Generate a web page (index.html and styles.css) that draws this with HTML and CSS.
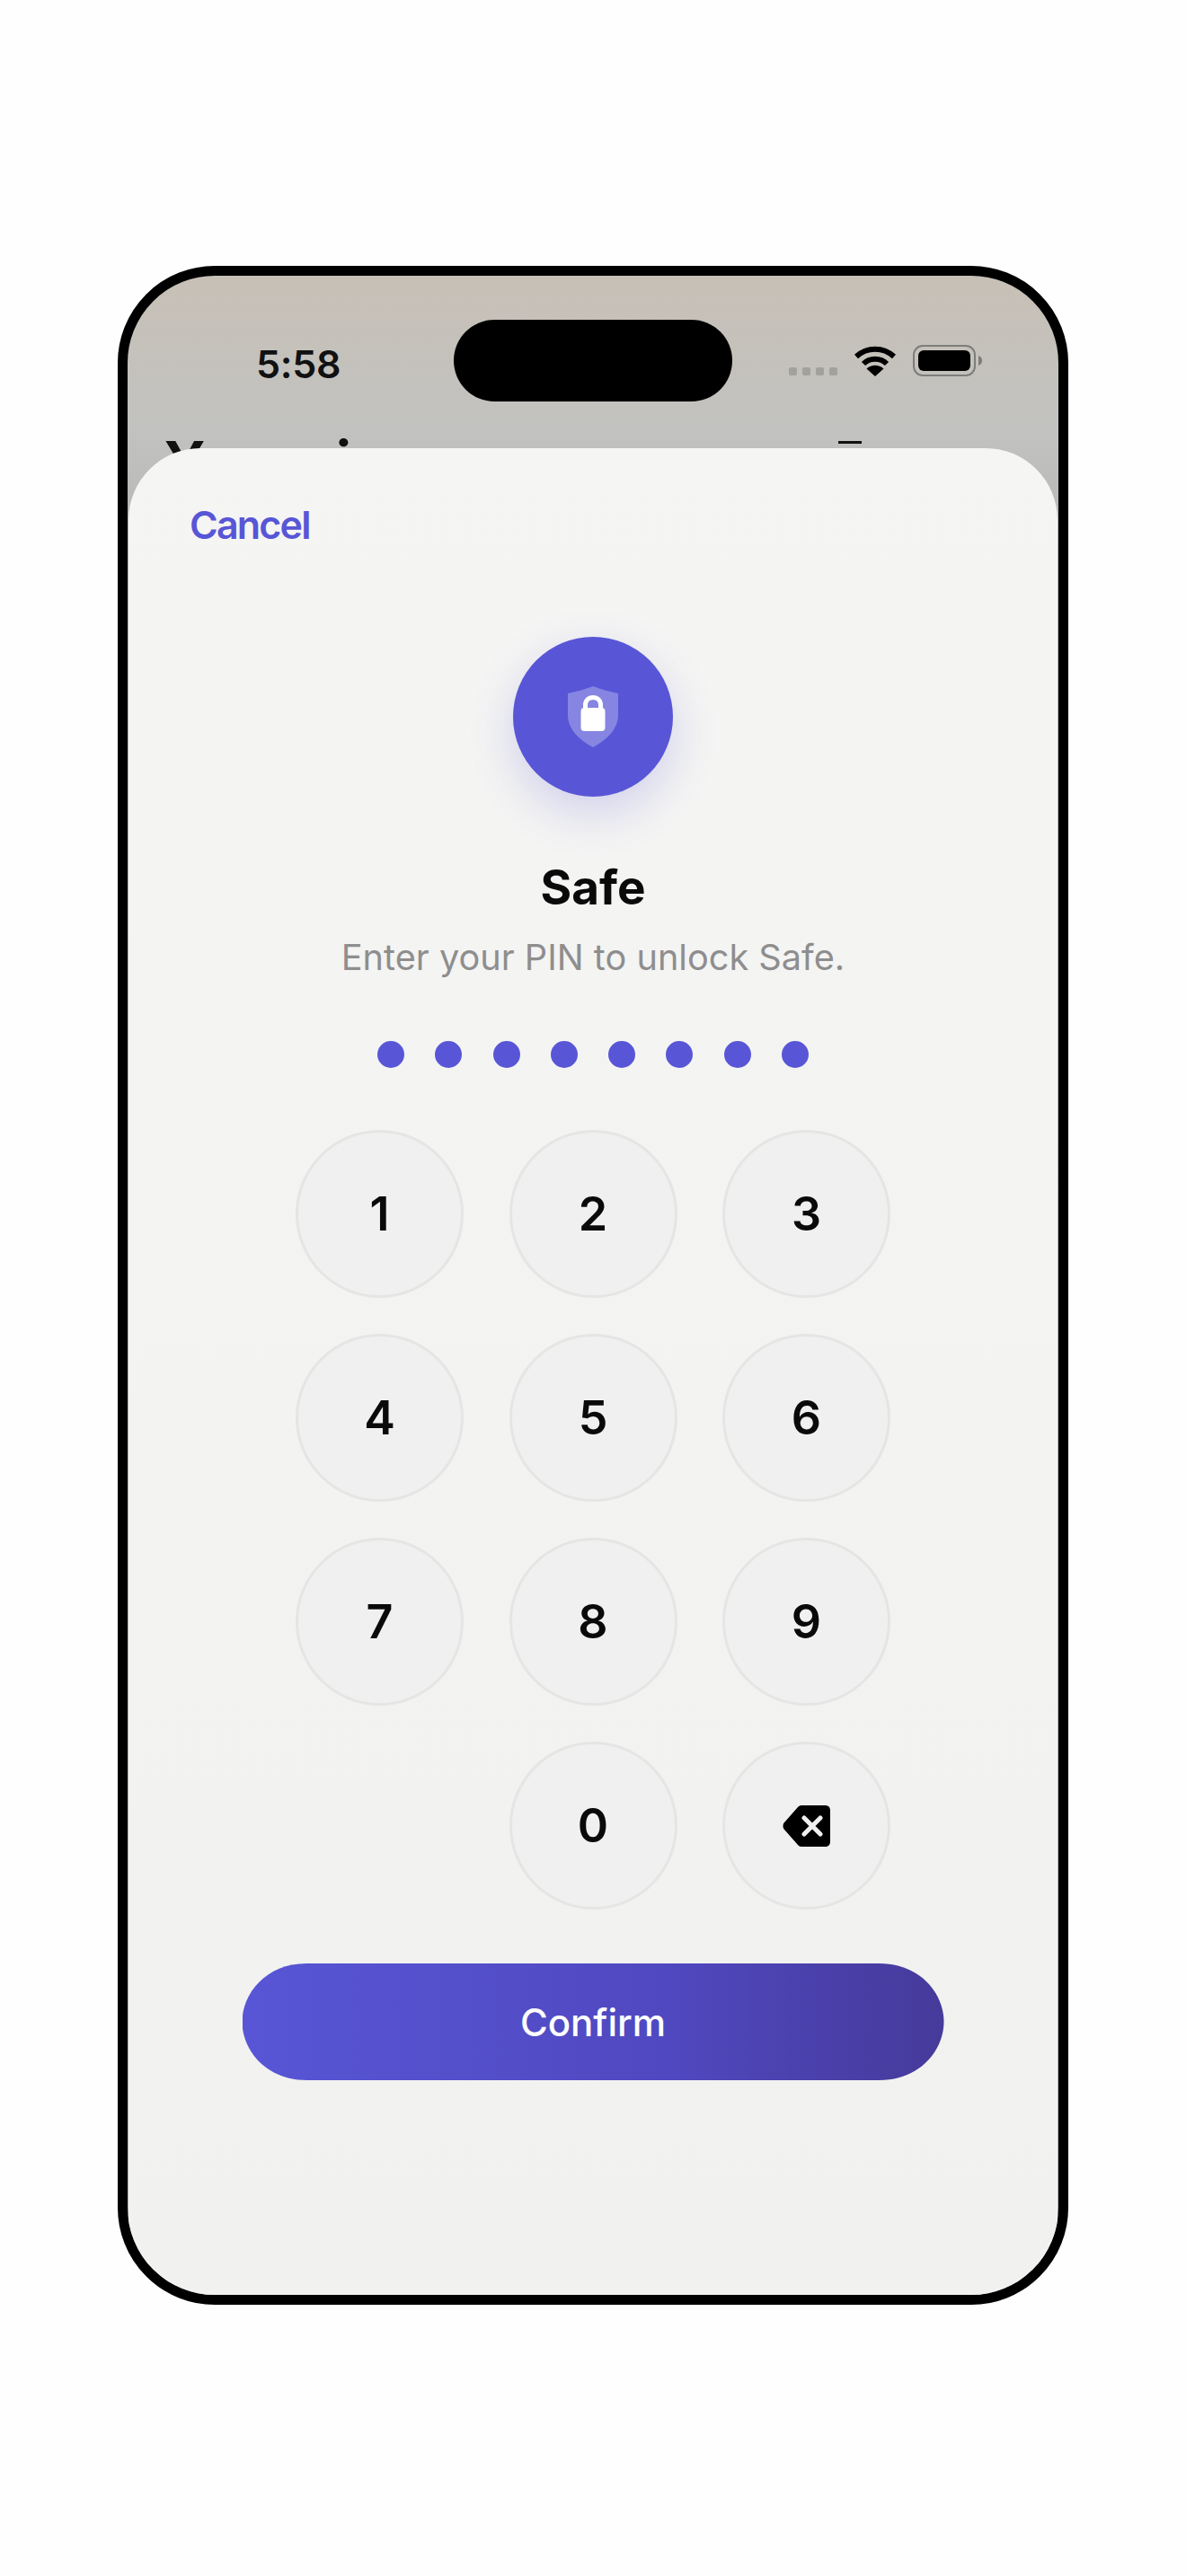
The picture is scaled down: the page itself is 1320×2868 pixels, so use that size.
FILE: index.html
```html
<!DOCTYPE html>
<html>
  <head>
    <title>Safe</title>
    <link rel="stylesheet" href="styles.css">
  </head>
  <body>
    <div class="phone">
      <div class="status">
        <span class="time">5:58</span>
        <div class="island"></div>
        <div class="signal">
          <i></i><i></i><i></i><i></i>
        </div>
        <svg class="wifi" viewBox="0 0 48 36">
          <path d="M3 13 C15 2 33 2 45 13" fill="none" stroke="#000" stroke-width="6"/>
          <path d="M11 21 C18 14 30 14 37 21" fill="none" stroke="#000" stroke-width="6"/>
          <path d="M24 35 L14.5 26.5 C20 21.5 28 21.5 33.5 26.5 Z" fill="#000"/>
        </svg>
        <svg class="battery" viewBox="0 0 78 36">
          <rect x="1" y="1" width="68" height="33" rx="10" fill="none" stroke="#7d7d7b" stroke-width="2"/>
          <rect x="6" y="6" width="58" height="23" rx="6" fill="#000"/>
          <path d="M73 12 C76 13 77 15 77 17.500 C77 20 76 22 73 23 Z" fill="#7d7d7b"/>
        </svg>
      </div>
      <div class="behind">
        <span class="behind-title">Your ai</span>
        <span class="behind-dash"></span>
      </div>

      <div class="sheet">
        <a class="cancel">Cancel</a>
        <div class="badge">
          <svg class="shield" viewBox="0 0 58 68">
            <path d="M29 0 C37 3 47 6 57 8 L57 32 C57 48 44 60 29 68 C14 60 1 48 1 32 L1 8 C11 6 21 3 29 0 Z" fill="#8685e2"/>
            <path d="M20.500 24 L20.500 21 C20.500 16 24 12.500 29 12.500 C34 12.500 37.500 16 37.500 21 L37.500 24" fill="none" stroke="#fff" stroke-width="5"/>
            <rect x="15.500" y="24" width="27" height="26" rx="4" fill="#fff"/>
          </svg>
        </div>
        <h1 class="title">Safe</h1>
        <p class="subtitle">Enter your PIN to unlock Safe.</p>
        <div class="pin-dots">
          <i></i><i></i><i></i><i></i><i></i><i></i><i></i><i></i>
        </div>
        <div class="keypad">
          <button class="key">1</button>
          <button class="key">2</button>
          <button class="key">3</button>
          <button class="key">4</button>
          <button class="key">5</button>
          <button class="key">6</button>
          <button class="key">7</button>
          <button class="key">8</button>
          <button class="key">9</button>
          <span></span>
          <button class="key">0</button>
          <button class="key">
            <svg class="backspace" viewBox="0 0 54 46">
              <path d="M17 2 C18 1 19 0 21 0 L47 0 C51 0 53 2 53 6 L53 40 C53 44 51 46 47 46 L21 46 C19 46 18 45 17 44 L2 27 C0 25 0 21 2 19 Z" fill="#000"/>
              <path d="M24 14 L42 32 M42 14 L24 32" fill="none" stroke="#f0f0f0" stroke-width="5" stroke-linecap="round"/>
            </svg>
          </button>
        </div>
        <button class="confirm">Confirm</button>
      </div>
    </div>
  </body>
</html>
```

FILE: styles.css
```css
html,
body {
  margin: 0;
  background-color: #fefefe;
  font-family: Inter, "Liberation Sans", sans-serif;
}
body {
  height: 2868px;
  padding-top: 296px;
  box-sizing: border-box;
}
.phone {
  position: relative;
  box-sizing: border-box;
  width: 1058px;
  height: 2270px;
  margin: 0 auto;
  border: 11px solid #000;
  border-radius: 108px;
  overflow: hidden;
  background: linear-gradient(#c7c0b6, #c2c2c0 170px, #b6b6b6 300px);
}
.status {
  display: flex;
  align-items: flex-start;
  padding: 49px 0 0 143px;
}
.time {
  width: 220px;
  margin-top: 23px;
  font-size: 43px;
  line-height: 52px;
  font-weight: 600;
  letter-spacing: -0.3px;
  color: #111;
}
.island {
  width: 310px;
  height: 91px;
  border-radius: 46px;
  background-color: #000;
}
.signal {
  display: flex;
  gap: 6px;
  margin: 53px 0 0 63px;
}
.signal i {
  width: 9px;
  height: 9px;
  border-radius: 2px;
  background-color: #a2a19e;
}
.wifi {
  width: 48px;
  height: 36px;
  margin: 28px 0 0 18px;
}
.battery {
  width: 78px;
  height: 36px;
  margin: 28px 0 0 18px;
}
.behind {
  display: flex;
  justify-content: space-between;
  padding: 36px 219px 0 41px;
}
.behind-title {
  font-size: 62px;
  line-height: 62px;
  font-weight: 700;
  color: #111;
}
.behind-dash {
  width: 26px;
  height: 3px;
  margin-top: 8px;
  background-color: #111;
}
.sheet {
  position: absolute;
  top: 192px;
  left: 1px;
  right: 1px;
  bottom: 0;
  display: flex;
  flex-direction: column;
  align-items: center;
  border-radius: 80px 80px 0 0;
  background: linear-gradient(#f5f5f4, #f1f1f0);
}
.cancel {
  align-self: flex-start;
  margin: 60px 0 0 68px;
  font-size: 43px;
  line-height: 50px;
  font-weight: 600;
  letter-spacing: -1.8px;
  color: #5856d6;
}
.badge {
  display: flex;
  align-items: center;
  justify-content: center;
  width: 178px;
  height: 178px;
  margin-top: 100px;
  border-radius: 50%;
  background-color: #5856d6;
  box-shadow: 0 18px 50px rgba(88, 86, 214, 0.22);
}
.shield {
  width: 58px;
  height: 68px;
}
.title {
  margin: 71px 0 0;
  font-size: 53px;
  line-height: 60px;
  font-weight: 700;
  color: #0a0a0a;
}
.subtitle {
  margin: 23px 0 0;
  font-size: 39.700px;
  line-height: 50px;
  font-weight: 400;
  color: #8e8e8e;
}
.pin-dots {
  display: flex;
  gap: 34.300px;
  margin-top: 68px;
}
.pin-dots i {
  width: 30px;
  height: 30px;
  border-radius: 50%;
  background-color: #5856d6;
}
.keypad {
  display: grid;
  grid-template-columns: repeat(3, 187px);
  grid-auto-rows: 187px;
  column-gap: 50.500px;
  row-gap: 40px;
  margin-top: 69px;
}
.key {
  display: flex;
  align-items: center;
  justify-content: center;
  padding: 0;
  border: 3px solid #e5e5e4;
  border-radius: 50%;
  background-color: #f0f0f0;
  font-family: inherit;
  font-size: 52px;
  font-weight: 600;
  color: #0a0a0a;
}
.backspace {
  width: 54px;
  height: 46px;
}
.confirm {
  width: 781px;
  height: 130px;
  margin-top: 60px;
  padding: 0;
  border: 0;
  clip-path: path("M72 0 H709 C755 0 781 34 781 65 C781 96 755 130 709 130 H72 C26 130 0 96 0 65 C0 34 26 0 72 0 Z");
  background: linear-gradient(90deg, #5856d6, #5048c0 60%, #463a9a);
  font-family: inherit;
  font-size: 42px;
  font-weight: 500;
  color: #fff;
}
```
